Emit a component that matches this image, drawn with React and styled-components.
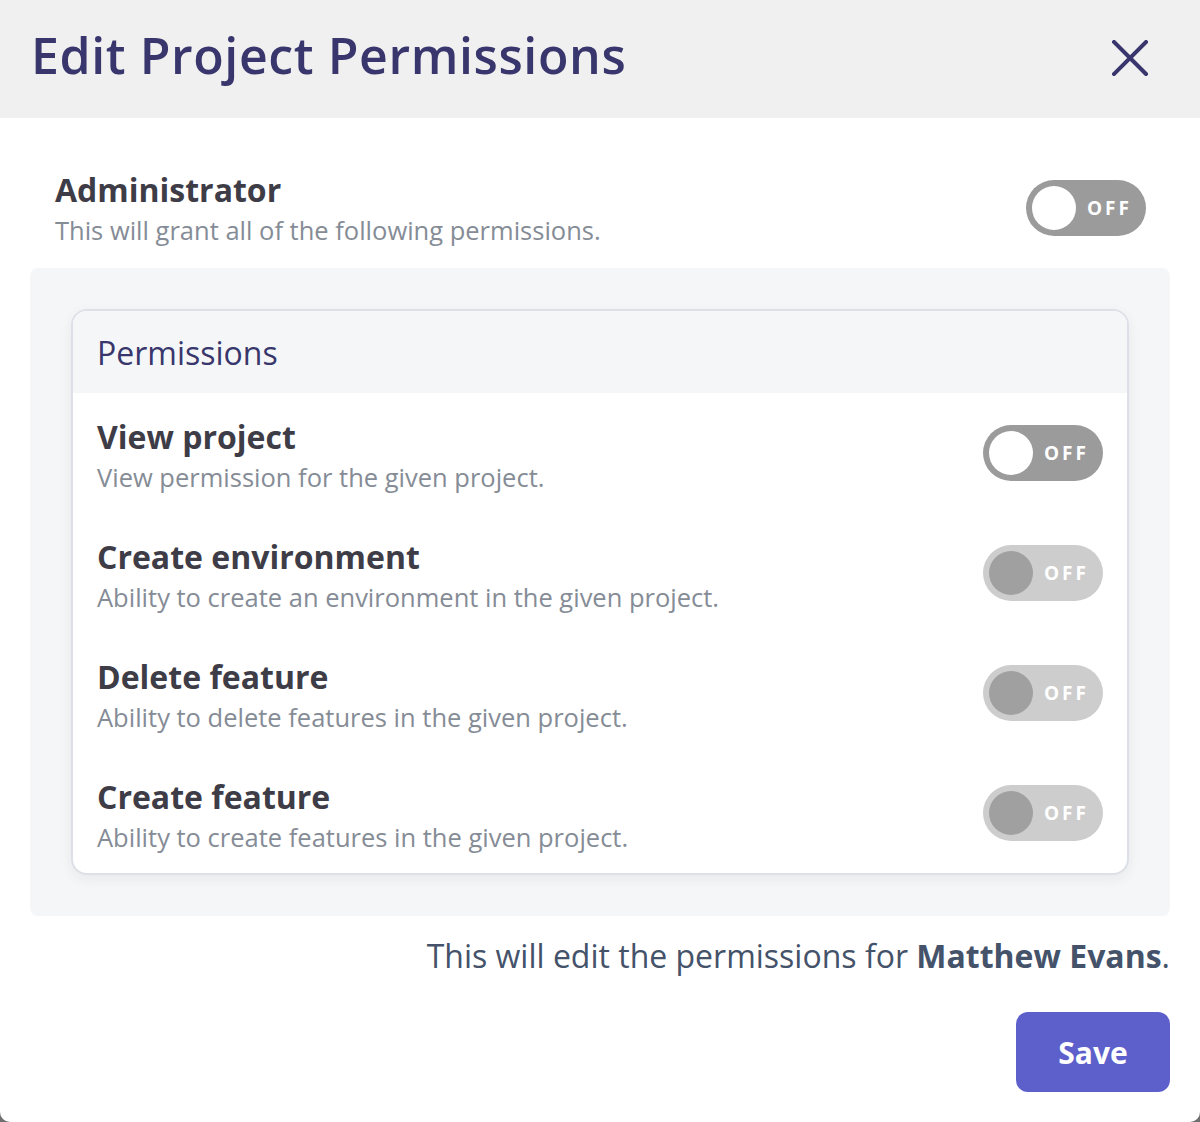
import React from 'react';
import styled, { createGlobalStyle } from 'styled-components';

const GlobalStyle = createGlobalStyle`
  html, body {
    margin: 0;
    padding: 0;
    background: #6f6f6f;
  }
  body {
    font-family: 'Open Sans', 'Noto Sans', sans-serif;
  }
`;

const Modal = styled.div`
  width: 1200px;
  height: 1122px;
  background: #fff;
  border-radius: 0 0 10px 10px;
  overflow: hidden;
  display: flex;
  flex-direction: column;
`;

const Header = styled.div`
  height: 118px;
  background: #f0f0f0;
  display: flex;
  align-items: center;
  justify-content: space-between;
  padding: 0 50px 0 31px;
  box-sizing: border-box;
`;

const Title = styled.h1`
  margin: 0;
  margin-top: -8px;
  font-size: 50px;
  font-weight: 600;
  color: #38366c;
  letter-spacing: 0.6px;
`;

const CloseButton = styled.button`
  border: none;
  background: none;
  padding: 0;
  width: 40px;
  height: 40px;
  display: flex;
  align-items: center;
  justify-content: center;
  cursor: pointer;
  margin-top: -2px;
`;

const Body = styled.div`
  padding: 0 30px;
  display: flex;
  flex-direction: column;
`;

const AdminRow = styled.div`
  display: flex;
  align-items: center;
  justify-content: space-between;
  padding: 50px 24px 20px 25px;
`;

const RowText = styled.div`
  display: flex;
  flex-direction: column;
  padding-top: ${p => (p.$shift ? '3px' : '0')};
`;

const RowTitle = styled.div`
  font-size: 32px;
  font-weight: 700;
  color: #3e3d47;
  line-height: 44px;
`;

const RowDesc = styled.div`
  font-size: 25.5px;
  color: #858c96;
  line-height: 36px;
`;

const Panel = styled.div`
  background: #f5f6f7;
  border-radius: 8px;
  padding: 41px;
`;

const Card = styled.div`
  background: #fff;
  border: 2px solid #dde1e7;
  border-radius: 16px;
  overflow: hidden;
  box-shadow: 0 4px 14px rgba(0, 0, 0, 0.06);
`;

const CardHeader = styled.div`
  background: #f5f6f7;
  height: 82px;
  display: flex;
  align-items: center;
  padding: 0 24px;
  font-size: 32px;
  color: #38366c;
`;

const PermRow = styled.div`
  display: flex;
  align-items: center;
  justify-content: space-between;
  height: 120px;
  padding: 0 24px;
  box-sizing: border-box;
`;

const Switch = styled.div`
  width: 120px;
  height: 56px;
  border-radius: 28px;
  background: ${p => (p.$disabled ? '#cdcdcd' : '#9b9b9b')};
  display: flex;
  align-items: center;
  padding: 0 6px;
  box-sizing: border-box;
  flex-shrink: 0;
`;

const Knob = styled.div`
  width: 44px;
  height: 44px;
  border-radius: 50%;
  background: ${p => (p.$disabled ? '#a0a0a0' : '#fff')};
`;

const SwitchLabel = styled.span`
  color: #fff;
  font-size: 19px;
  font-weight: 700;
  letter-spacing: 3px;
  margin-left: 11px;
`;

const Note = styled.div`
  text-align: right;
  font-size: 32px;
  color: #44526a;
  padding-top: 18px;
  line-height: 44px;
  b {
    font-weight: 700;
  }
`;

const Footer = styled.div`
  display: flex;
  justify-content: flex-end;
  padding-top: 34px;
`;

const SaveButton = styled.button`
  width: 154px;
  height: 80px;
  border: none;
  border-radius: 12px;
  background: #5d5fcb;
  color: #fff;
  font-family: 'Open Sans', sans-serif;
  font-size: 30px;
  font-weight: 700;
  cursor: pointer;
`;

function Toggle({ disabled }) {
  return (
    <Switch $disabled={disabled}>
      <Knob $disabled={disabled} />
      <SwitchLabel>OFF</SwitchLabel>
    </Switch>
  );
}

const permissions = [
  { title: 'View project', desc: 'View permission for the given project.', disabled: false },
  { title: 'Create environment', desc: 'Ability to create an environment in the given project.', disabled: true },
  { title: 'Delete feature', desc: 'Ability to delete features in the given project.', disabled: true },
  { title: 'Create feature', desc: 'Ability to create features in the given project.', disabled: true },
];

export default function App() {
  return (
    <>
      <GlobalStyle />
      <Modal>
        <Header>
          <Title>Edit Project Permissions</Title>
          <CloseButton aria-label="Close">
            <svg width="36" height="36" viewBox="0 0 36 36">
              <path d="M2 2 L34 34 M34 2 L2 34" stroke="#38366c" strokeWidth="4" strokeLinecap="square" />
            </svg>
          </CloseButton>
        </Header>
        <Body>
          <AdminRow>
            <RowText>
              <RowTitle>Administrator</RowTitle>
              <RowDesc>This will grant all of the following permissions.</RowDesc>
            </RowText>
            <Toggle />
          </AdminRow>
          <Panel>
            <Card>
              <CardHeader>Permissions</CardHeader>
              {permissions.map(p => (
                <PermRow key={p.title}>
                  <RowText $shift>
                    <RowTitle>{p.title}</RowTitle>
                    <RowDesc>{p.desc}</RowDesc>
                  </RowText>
                  <Toggle disabled={p.disabled} />
                </PermRow>
              ))}
            </Card>
          </Panel>
          <Note>
            This will edit the permissions for <b>Matthew Evans</b>.
          </Note>
          <Footer>
            <SaveButton>Save</SaveButton>
          </Footer>
        </Body>
      </Modal>
    </>
  );
}
